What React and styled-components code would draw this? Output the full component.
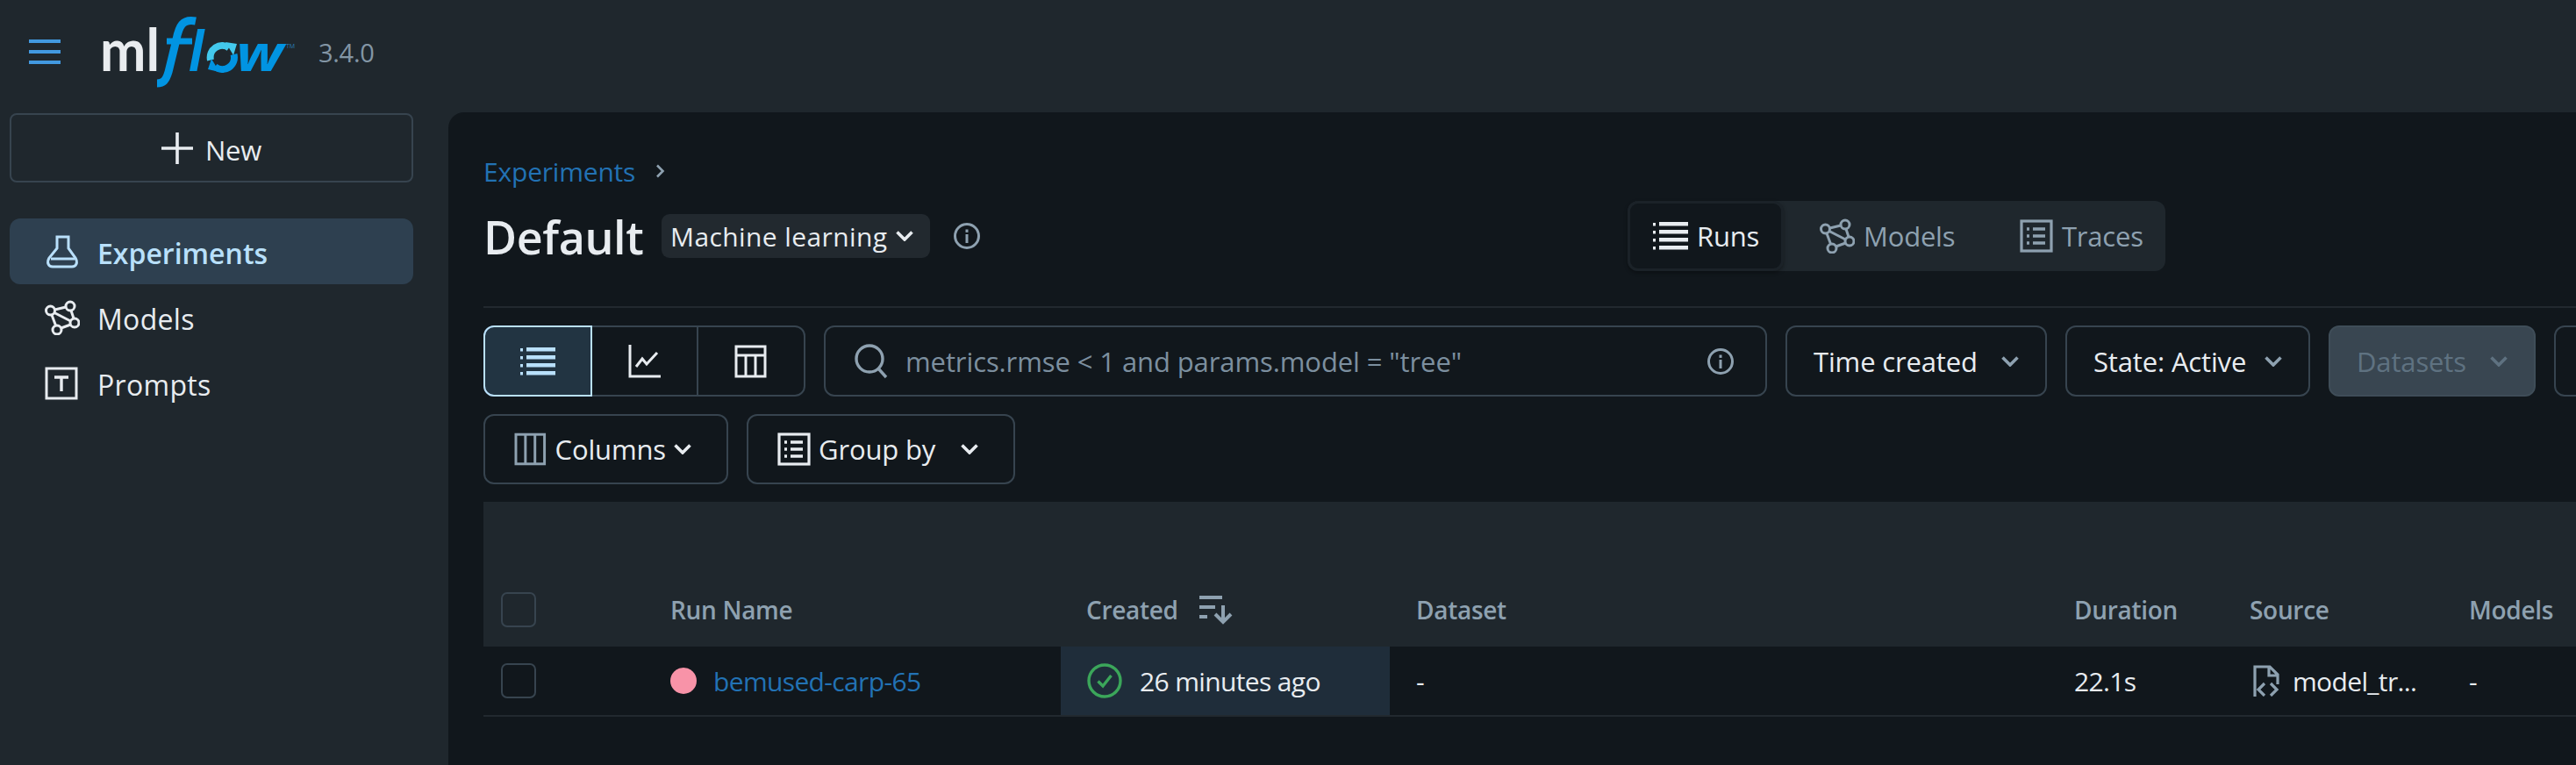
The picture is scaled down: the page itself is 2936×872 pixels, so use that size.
import React from "react";
import styled, { createGlobalStyle } from "styled-components";

const Global = createGlobalStyle`
  html, body { margin: 0; padding: 0; height: 872px; overflow: hidden; background: #1f272d; }
  body { font-family: "Open Sans", "Noto Sans", sans-serif; color: #e8ecf0; font-size: 30px; }
  * { box-sizing: border-box; }
`;

const Page = styled.div`
  width: 2936px; height: 872px; overflow: hidden; background: #1f272d;
  display: flex; flex-direction: column;
`;
const TopBar = styled.header`
  height: 128px; flex: none; display: flex; align-items: center; padding: 0 0 10px 33px;
`;
const Burger = styled.div`
  width: 36px; height: 28px; flex: none; margin-right: 44px;
  display: flex; flex-direction: column; justify-content: space-between;
  & > i { display: block; height: 4px; background: #4299e0; }
`;
const LogoSvg = styled.svg`
  width: 226px; height: 108px; flex: none;
`;
const Version = styled.span`
  margin-left: 24px; font-size: 29px; letter-spacing: -0.3px; color: #8396a5;
`;
const Body = styled.div`flex: 1; display: flex; min-height: 0;`;
const Sidebar = styled.aside`
  width: 511px; flex: none; padding: 1px 40px 0 11px; display: flex; flex-direction: column;
`;
const NewButton = styled.div`
  height: 79px; border: 2px solid #37444f; border-radius: 8px; display: flex;
  align-items: center; justify-content: center; gap: 14px; font-size: 31px; letter-spacing: -0.2px;
  margin-bottom: 41px;
`;
const NavItem = styled.div`
  height: 75px; border-radius: 12px; display: flex; align-items: center; padding-left: 40px;
  gap: ${p => p.$gap || 20}px;
  font-size: 32px; letter-spacing: ${p => (p.$active ? "0" : "0.3px")};
  font-weight: ${p => (p.$active ? 600 : 400)};
  background: ${p => (p.$active ? "#2e4050" : "transparent")};
  color: ${p => (p.$active ? "#b9e0fb" : "#e8ecf0")};
  & > svg { flex: none; }
`;
const NavLabel = styled.span`padding-top: 4px;`;
const Main = styled.main`
  flex: 1; min-width: 0; background: #11171c; border-top-left-radius: 18px;
  padding: 47px 0 0 40px; overflow: hidden;
`;
const Breadcrumb = styled.div`
  height: 40px; display: flex; align-items: center; gap: 23px; font-size: 30px; letter-spacing: -0.2px; color: #2272b4;
`;
const TitleRow = styled.div`
  margin-top: 14px; height: 80px; display: flex; align-items: center;
`;
const TitleGroup = styled.div`
  width: 1304px; flex: none; display: flex; align-items: center;
`;
const Title = styled.h1`
  margin: 0; font-size: 52px; font-weight: 600; letter-spacing: -0.4px; color: #e8ecf0; width: 203px; flex: none;
`;
const Tag = styled.div`
  width: 306px; height: 50px; background: #22292f; border-radius: 9px; display: flex; align-items: center;
  padding: 0 19px 0 10px; justify-content: space-between; font-size: 30px; letter-spacing: 0.4px;
`;
const InfoSlot = styled.div`margin-left: 26px; display: flex;`;
const Tabs = styled.div`
  width: 613px; height: 80px; background: #1f272d; border-radius: 12px; display: flex; align-items: center;
  font-size: 31px; letter-spacing: -0.2px; color: #8ea1b0; flex: none;
`;
const Tab = styled.div`
  height: ${p => (p.$active ? "80px" : "auto")};
  width: ${p => p.$w}px; flex: none; display: flex; align-items: center; gap: ${p => p.$gap || 10}px;
  padding-left: ${p => p.$pad}px; border-radius: 12px;
  ${p => p.$active && "background: #11171c; border: 3px solid #1b2228; color: #e8ecf0; box-shadow: 0 2px 4px rgba(0,0,0,.35);"}
`;
const Divider = styled.div`height: 2px; background: #22292f; margin-top: 40px;`;
const Toolbar = styled.div`
  display: flex; gap: 21px; height: ${p => p.$h || 81}px; margin-top: 20px; align-items: stretch;
`;
const SegGroup = styled.div`
  width: 367px; flex: none; display: flex; border: 2px solid #37444f; border-radius: 12px;
`;
const Seg = styled.div`
  flex: 1; display: flex; align-items: center; justify-content: center;
  ${p => p.$active
    ? "background: #223442; margin: -2px 0 -2px -2px; border: 2px solid #b9e0fb; border-radius: 12px 0 0 12px;"
    : "border-right: 2px solid #37444f; &:last-child { border-right: 0; }"}
`;
const Search = styled.div`
  width: 1075px; flex: none; border: 2px solid #37444f; border-radius: 12px; display: flex; align-items: center;
  padding: 0 35px 0 32px; gap: 19px; color: #7c8f9f; font-size: 31px; letter-spacing: -0.1px;
  & > span { flex: 1; white-space: nowrap; }
`;
const Btn = styled.div`
  width: ${p => p.$w}px; flex: none; border: 2px solid ${p => (p.$disabled ? "#3f4d58" : "#37444f")};
  border-radius: 12px; display: flex; align-items: center; padding: 0 ${p => p.$right || 30}px 0 ${p => p.$left || 30}px;
  font-size: 31px; letter-spacing: -0.15px; white-space: nowrap; gap: 9px;
  background: ${p => (p.$disabled ? "#394651" : "transparent")};
  color: ${p => (p.$disabled ? "#5f7281" : "#e8ecf0")};
  & > .chev { margin-left: auto; flex: none; }
`;
const Table = styled.div`margin-top: 20px;`;
const cols = "213px 445px 375px 750px 200px 250px 1fr";
const HeadRow = styled.div`
  height: 165px; background: #1f272d; display: grid; grid-template-columns: ${cols}; align-items: end;
  font-size: 28px; font-weight: 600; letter-spacing: -0.3px; color: #8ea1b0;
`;
const HeadCell = styled.div`
  height: 84px; display: flex; align-items: center; padding-left: ${p => p.$pad ?? 30}px; gap: 24px; white-space: nowrap;
`;
const Row = styled.div`
  height: 80px; border-bottom: 2px solid #22292f; display: grid; grid-template-columns: ${cols};
  font-size: 30px; letter-spacing: -0.65px; color: #e8ecf0;
`;
const Cell = styled.div`
  display: flex; align-items: center; padding-left: ${p => p.$pad ?? 30}px; gap: ${p => p.$gap || 15}px; white-space: nowrap;
  background: ${p => (p.$hl ? "#1f2d3a" : "transparent")};
`;
const Check = styled.div`
  width: 40px; height: 40px; border: 2px solid #37444f; border-radius: 7px; flex: none;
`;
const Dot = styled.div`
  width: 30px; height: 30px; border-radius: 50%; background: #f893a8; flex: none;
`;
const RunLink = styled.span`color: #2272b4;`;

const S = ({ size = 40, box = 40, color = "currentColor", sw = 3, children, fill = "none" }) => (
  <svg width={size} height={size} viewBox={`0 0 ${box} ${box}`} fill={fill} stroke={color} strokeWidth={sw}>{children}</svg>
);
const Chevron = ({ w = 20, color = "#e8ecf0", sw = 3.6, className }) => (
  <svg className={className} width={w} height={12} viewBox="0 0 20 12" fill="none" stroke={color} strokeWidth={sw}>
    <path d="M1.5 1.5 L10 10 L18.5 1.5" />
  </svg>
);
const Info = ({ color = "#8ea1b0" }) => (
  <svg width={32} height={32} viewBox="0 0 32 32" fill="none">
    <circle cx="16" cy="16" r="13.5" stroke={color} strokeWidth="3" />
    <rect x="14.5" y="14" width="3" height="10" fill={color} />
    <rect x="14.5" y="8.5" width="3" height="3.4" fill={color} />
  </svg>
);
const ListI = ({ color = "currentColor", size = 40 }) => (
  <svg width={size} height={size * 0.8} viewBox="0 0 40 32" fill={color}>
    <rect x="0" y="1" width="3" height="3.5" /><rect x="7" y="0" width="33" height="4.5" />
    <rect x="0" y="10" width="3" height="3.5" /><rect x="7" y="9" width="33" height="4.5" />
    <rect x="0" y="19" width="3" height="3.5" /><rect x="7" y="18" width="33" height="4.5" />
    <rect x="0" y="28" width="3" height="3.5" /><rect x="7" y="27" width="33" height="4.5" />
  </svg>
);
const ModelI = ({ color = "currentColor" }) => (
  <S color={color}>
    <circle cx="29" cy="7" r="5" /><circle cx="6.5" cy="12" r="5" />
    <circle cx="34" cy="26" r="5" /><circle cx="14" cy="34" r="5" />
    <path d="M11.5 11 L24 8 M11 14.5 L29.5 24 M8 17 L12.5 29 M30 12 L33 21 M18.5 32 L29.5 28" />
  </S>
);
const FlaskI = () => (
  <S size={40} color="#b9e0fb">
    <path d="M14 3 H27 V16 L35 27 C38 32 36 37 31 37 H9 C4 37 2 32 5 27 L14 16 Z" />
    <path d="M7 28 H34" />
  </S>
);
const PromptI = () => (
  <S size={38} box={38} color="#e8ecf0">
    <rect x="2" y="2" width="34" height="34" />
    <path d="M11 12 H27 M19 12 V28" strokeWidth="3.4" />
  </S>
);
const TraceI = ({ color = "currentColor" }) => (
  <svg width={38} height={38} viewBox="0 0 38 38" fill="none" stroke={color} strokeWidth="3.2">
    <rect x="2" y="2" width="34" height="34" />
    <path d="M8 11 H11 M8 19 H11 M8 27 H11 M15 11 H29 M15 19 H29 M15 27 H29" strokeWidth="3.6" />
  </svg>
);
const ChartI = () => (
  <S size={38} box={38} color="#e8ecf0">
    <path d="M2 0 V36 H37" />
    <path d="M9 25 L16 16 L21 22 L33 9" />
  </S>
);
const TableI = () => (
  <S size={38} box={38} color="#e8ecf0">
    <rect x="2" y="2" width="33" height="34" />
    <path d="M2 12 H35 M13 12 V36 M24 12 V36" />
  </S>
);
const ColumnsI = () => (
  <S size={38} box={38} color="#8ea1b0">
    <rect x="2" y="2" width="33" height="34" />
    <path d="M13 2 V36 M24 2 V36" />
  </S>
);
const SearchI = () => (
  <S size={40} color="#8ea1b0" sw={3.4}>
    <circle cx="18" cy="17" r="15" />
    <path d="M28 28 L37 38" />
  </S>
);
const SortI = () => (
  <svg width={38} height={34} viewBox="0 0 38 34" fill="none" stroke="#8ea1b0" strokeWidth="4">
    <path d="M0 3 H26 M0 14 H18 M0 25 H9" />
    <path d="M27 12 V31 M18 22 L27 31 L36 22" />
  </svg>
);
const StatusI = () => (
  <svg width={40} height={40} viewBox="0 0 40 40" fill="none" stroke="#3ba65a">
    <circle cx="20" cy="20" r="18" strokeWidth="3.4" />
    <path d="M12.5 20.5 L18 26 L27.5 14" strokeWidth="3.4" />
  </svg>
);
const FileI = () => (
  <svg width={30} height={36} viewBox="0 0 30 36" fill="none" stroke="#8ea1b0" strokeWidth="3.2">
    <path d="M2 36 V2 H19 L28 11 V22 M18 2 V12 H28" />
    <path d="M13 21 L6 28 L13 35 M20 21 L27 28 L20 35" />
  </svg>
);
const PlusI = () => (
  <svg width={36} height={36} viewBox="0 0 36 36" stroke="#e8ecf0" strokeWidth="3.6">
    <path d="M0 18 H36 M18 0 V36" />
  </svg>
);
const Logo = () => (
  <LogoSvg viewBox="-4 -12 226 108">
    <text x="-3" y="64" fontFamily="Lato, 'Open Sans', sans-serif" fontWeight="700" fontSize="66" fill="#e9ecef" textLength="68" lengthAdjust="spacingAndGlyphs">ml</text>
    <path d="M106 7 C91 4 87 13 84 28 L75 65 C72 75 69 78 62 78" fill="none" stroke="#0194e2" strokeWidth="9" />
    <path d="M73 30 H102" fill="none" stroke="#0194e2" strokeWidth="7" />
    <text x="98" y="64" fontFamily="'Open Sans', sans-serif" fontStyle="italic" fontWeight="700" fontSize="62" fill="#0194e2" textLength="17" lengthAdjust="spacingAndGlyphs">l</text>
    <path d="M123 51.5 A13.5 13.5 0 0 1 144 37.5" fill="none" stroke="#43c9ed" strokeWidth="8" />
    <polygon points="140,31 153,33 149,46" fill="#43c9ed" />
    <path d="M149.5 45 A13.5 13.5 0 0 1 128 59" fill="none" stroke="#0194e2" strokeWidth="8" />
    <polygon points="133,65 120,62 124,50" fill="#0194e2" />
    <text x="152" y="64" fontFamily="'Open Sans', sans-serif" fontStyle="italic" fontWeight="700" fontSize="58" fill="#0194e2" textLength="54" lengthAdjust="spacingAndGlyphs">w</text>
    <text x="209" y="38" fontFamily="'Open Sans', sans-serif" fontSize="7" fill="#2a7fb5">TM</text>
  </LogoSvg>
);

export default function App() {
  return (
    <Page>
      <Global />
      <TopBar>
        <Burger><i /><i /><i /></Burger>
        <Logo />
        <Version>3.4.0</Version>
      </TopBar>
      <Body>
        <Sidebar>
          <NewButton><PlusI /><NavLabel>New</NavLabel></NewButton>
          <NavItem $active><FlaskI /><NavLabel>Experiments</NavLabel></NavItem>
          <NavItem><ModelI color="#e8ecf0" /><NavLabel>Models</NavLabel></NavItem>
          <NavItem $gap={22}><PromptI /><NavLabel>Prompts</NavLabel></NavItem>
        </Sidebar>
        <Main>
          <Breadcrumb>Experiments
            <svg width="11" height="16" viewBox="0 0 11 16" fill="none" stroke="#8ea1b0" strokeWidth="2.6"><path d="M2 1.5 L8.5 8 L2 14.5" /></svg>
          </Breadcrumb>
          <TitleRow>
            <TitleGroup>
              <Title>Default</Title>
              <Tag>Machine learning<Chevron /></Tag>
              <InfoSlot><Info /></InfoSlot>
            </TitleGroup>
            <Tabs>
              <Tab $active $w={178} $pad={26}><ListI />Runs</Tab>
              <Tab $w={269} $pad={41}><ModelI />Models</Tab>
              <Tab $w={166} $pad={0}><TraceI />Traces</Tab>
            </Tabs>
          </TitleRow>
          <Divider />
          <Toolbar>
            <SegGroup>
              <Seg $active><ListI color="#b9e0fb" /></Seg>
              <Seg><ChartI /></Seg>
              <Seg><TableI /></Seg>
            </SegGroup>
            <Search><SearchI /><span>metrics.rmse &lt; 1 and params.model = "tree"</span><Info /></Search>
            <Btn $w={298}>Time created<Chevron className="chev" color="#8ea1b0" /></Btn>
            <Btn $w={279}>State: Active<Chevron className="chev" color="#8ea1b0" /></Btn>
            <Btn $w={236} $disabled>Datasets<Chevron className="chev" color="#5f7281" /></Btn>
            <Btn $w={200} />
          </Toolbar>
          <Toolbar $h={80}>
            <Btn $w={279} $left={33} $right={40}><ColumnsI />Columns<Chevron className="chev" /></Btn>
            <Btn $w={306} $left={33} $right={40}><TraceI />Group by<Chevron className="chev" /></Btn>
          </Toolbar>
          <Table>
            <HeadRow>
              <HeadCell $pad={20}><Check /></HeadCell>
              <HeadCell $pad={0}>Run Name</HeadCell>
              <HeadCell $pad={29}>Created<SortI /></HeadCell>
              <HeadCell>Dataset</HeadCell>
              <HeadCell>Duration</HeadCell>
              <HeadCell>Source</HeadCell>
              <HeadCell>Models</HeadCell>
            </HeadRow>
            <Row>
              <Cell $pad={20}><Check /></Cell>
              <Cell $pad={0} $gap={19}><Dot /><RunLink>bemused-carp-65</RunLink></Cell>
              <Cell $hl $gap={20}><StatusI />26 minutes ago</Cell>
              <Cell>-</Cell>
              <Cell>22.1s</Cell>
              <Cell $pad={34}><FileI />model_tr...</Cell>
              <Cell>-</Cell>
            </Row>
          </Table>
        </Main>
      </Body>
    </Page>
  );
}
